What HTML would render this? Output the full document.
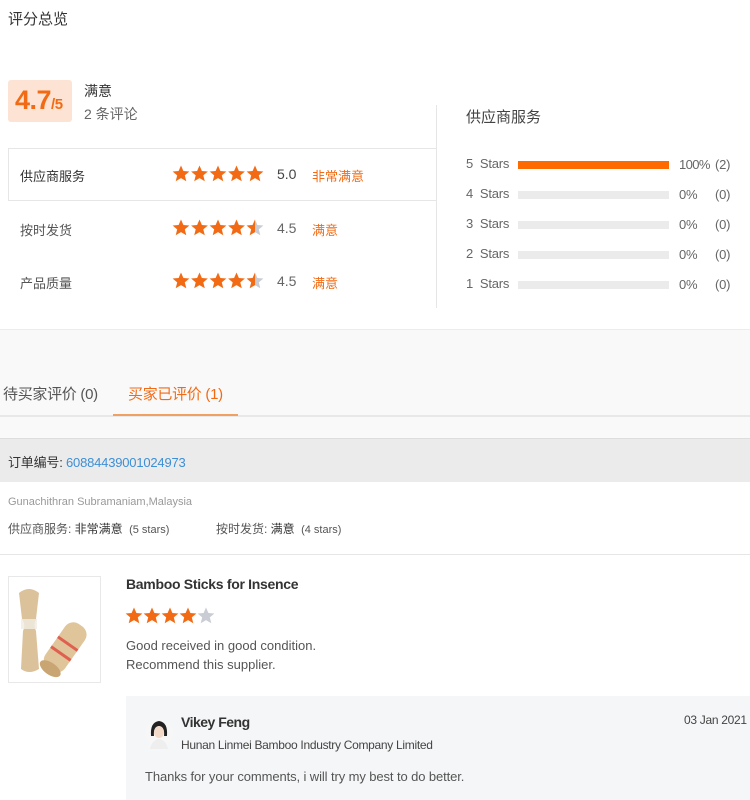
<!DOCTYPE html>
<html><head><meta charset="utf-8"><style>
*{margin:0;padding:0;box-sizing:border-box}
body{width:750px;height:800px;position:relative;background:#fff;font-family:"Liberation Sans","Noto Sans CJK SC",sans-serif;color:#333;overflow:hidden}
.a{position:absolute;white-space:nowrap}
svg.s{position:absolute}
.g{color:#666}
.o{color:#f26b14}
.bar{position:absolute;left:518px;width:151px;height:8px;background:#ebebeb}
.r{font-size:13px;letter-spacing:-0.2px}
</style></head><body>
<div class="a" style="left:8px;top:8px;font-size:15px;color:#333">评分总览</div>

<div class="a" style="left:8px;top:80px;width:64px;height:42px;background:#fde3d3;border-radius:3px"></div>
<div class="a o" style="left:15px;top:85px;font-size:27px;font-weight:bold;color:#f26b14;letter-spacing:-0.5px">4.7<span style="font-size:15px">/5</span></div>
<div class="a" style="left:84px;top:81px;font-size:14px;color:#333">满意</div>
<div class="a g" style="left:84px;top:104px;font-size:14px">2 条评论</div>

<div class="a" style="left:436px;top:105px;width:1px;height:203px;background:#e6e6e6"></div>
<div class="a" style="left:8px;top:148px;width:429px;height:53px;border:1px solid #e6e6e6;border-right:none"></div>

<div class="a" style="left:20px;top:166px;font-size:13px;color:#333">供应商服务</div>
<div class="a" style="left:20px;top:220px;font-size:13px;color:#555">按时发货</div>
<div class="a" style="left:20px;top:273px;font-size:13px;color:#555">产品质量</div>

<svg class="s" style="left:172px;top:165px" width="92" height="18" viewBox="0 0 92 18" fill="#f26b14">
<polygon points="9,0.5 11.4,6 17.4,6.5 12.8,10.4 14.3,16.3 9,13.1 3.7,16.3 5.2,10.4 0.6,6.5 6.6,6"/>
<polygon transform="translate(18.5 0)" points="9,0.5 11.4,6 17.4,6.5 12.8,10.4 14.3,16.3 9,13.1 3.7,16.3 5.2,10.4 0.6,6.5 6.6,6"/>
<polygon transform="translate(37 0)" points="9,0.5 11.4,6 17.4,6.5 12.8,10.4 14.3,16.3 9,13.1 3.7,16.3 5.2,10.4 0.6,6.5 6.6,6"/>
<polygon transform="translate(55.5 0)" points="9,0.5 11.4,6 17.4,6.5 12.8,10.4 14.3,16.3 9,13.1 3.7,16.3 5.2,10.4 0.6,6.5 6.6,6"/>
<polygon transform="translate(74 0)" points="9,0.5 11.4,6 17.4,6.5 12.8,10.4 14.3,16.3 9,13.1 3.7,16.3 5.2,10.4 0.6,6.5 6.6,6"/>
</svg>
<svg class="s" style="left:172px;top:219px" width="92" height="18" viewBox="0 0 92 18" fill="#f26b14">
<polygon points="9,0.5 11.4,6 17.4,6.5 12.8,10.4 14.3,16.3 9,13.1 3.7,16.3 5.2,10.4 0.6,6.5 6.6,6"/>
<polygon transform="translate(18.5 0)" points="9,0.5 11.4,6 17.4,6.5 12.8,10.4 14.3,16.3 9,13.1 3.7,16.3 5.2,10.4 0.6,6.5 6.6,6"/>
<polygon transform="translate(37 0)" points="9,0.5 11.4,6 17.4,6.5 12.8,10.4 14.3,16.3 9,13.1 3.7,16.3 5.2,10.4 0.6,6.5 6.6,6"/>
<polygon transform="translate(55.5 0)" points="9,0.5 11.4,6 17.4,6.5 12.8,10.4 14.3,16.3 9,13.1 3.7,16.3 5.2,10.4 0.6,6.5 6.6,6"/>
<polygon transform="translate(74 0)" fill="#c9ccd4" points="9,0.5 11.4,6 17.4,6.5 12.8,10.4 14.3,16.3 9,13.1 3.7,16.3 5.2,10.4 0.6,6.5 6.6,6"/>
<polygon transform="translate(74 0)" points="9,0.5 9,13.1 3.7,16.3 5.2,10.4 0.6,6.5 6.6,6"/>
</svg>
<svg class="s" style="left:172px;top:272px" width="92" height="18" viewBox="0 0 92 18" fill="#f26b14">
<polygon points="9,0.5 11.4,6 17.4,6.5 12.8,10.4 14.3,16.3 9,13.1 3.7,16.3 5.2,10.4 0.6,6.5 6.6,6"/>
<polygon transform="translate(18.5 0)" points="9,0.5 11.4,6 17.4,6.5 12.8,10.4 14.3,16.3 9,13.1 3.7,16.3 5.2,10.4 0.6,6.5 6.6,6"/>
<polygon transform="translate(37 0)" points="9,0.5 11.4,6 17.4,6.5 12.8,10.4 14.3,16.3 9,13.1 3.7,16.3 5.2,10.4 0.6,6.5 6.6,6"/>
<polygon transform="translate(55.5 0)" points="9,0.5 11.4,6 17.4,6.5 12.8,10.4 14.3,16.3 9,13.1 3.7,16.3 5.2,10.4 0.6,6.5 6.6,6"/>
<polygon transform="translate(74 0)" fill="#c9ccd4" points="9,0.5 11.4,6 17.4,6.5 12.8,10.4 14.3,16.3 9,13.1 3.7,16.3 5.2,10.4 0.6,6.5 6.6,6"/>
<polygon transform="translate(74 0)" points="9,0.5 9,13.1 3.7,16.3 5.2,10.4 0.6,6.5 6.6,6"/>
</svg>

<div class="a g" style="left:277px;top:166px;font-size:14px;color:#444">5.0</div>
<div class="a g" style="left:277px;top:220px;font-size:14px">4.5</div>
<div class="a g" style="left:277px;top:273px;font-size:14px">4.5</div>
<div class="a o" style="left:312px;top:166px;font-size:13px">非常满意</div>
<div class="a o" style="left:312px;top:220px;font-size:13px">满意</div>
<div class="a o" style="left:312px;top:273px;font-size:13px">满意</div>

<div class="a" style="left:466px;top:106px;font-size:15px;color:#444">供应商服务</div>
<div class="a g r" style="left:466px;top:156px">5&nbsp; Stars</div>
<div class="a g r" style="left:466px;top:186px">4&nbsp; Stars</div>
<div class="a g r" style="left:466px;top:216px">3&nbsp; Stars</div>
<div class="a g r" style="left:466px;top:246px">2&nbsp; Stars</div>
<div class="a g r" style="left:466px;top:276px">1&nbsp; Stars</div>
<div class="bar" style="top:161px;background:#ff6a00"></div>
<div class="bar" style="top:191px"></div>
<div class="bar" style="top:221px"></div>
<div class="bar" style="top:251px"></div>
<div class="bar" style="top:281px"></div>
<div class="a g r" style="left:679px;top:157px;letter-spacing:-0.6px">100%</div>
<div class="a g r" style="left:679px;top:187px">0%</div>
<div class="a g r" style="left:679px;top:217px">0%</div>
<div class="a g r" style="left:679px;top:247px">0%</div>
<div class="a g r" style="left:679px;top:277px">0%</div>
<div class="a g r" style="left:715px;top:157px">(2)</div>
<div class="a g r" style="left:715px;top:187px">(0)</div>
<div class="a g r" style="left:715px;top:217px">(0)</div>
<div class="a g r" style="left:715px;top:247px">(0)</div>
<div class="a g r" style="left:715px;top:277px">(0)</div>

<div class="a" style="left:0;top:329px;width:750px;height:109px;background:#f9f9f9;border-top:1px solid #ececec"></div>
<div class="a" style="left:0;top:415px;width:750px;height:2px;background:#e8e8e8"></div>
<div class="a" style="left:3px;top:383px;font-size:15px;color:#555;letter-spacing:-0.3px">待买家评价 (0)</div>
<div class="a o" style="left:128px;top:383px;font-size:15px;letter-spacing:-0.3px">买家已评价 (1)</div>
<div class="a" style="left:113px;top:414px;width:125px;height:2px;background:#f0a060"></div>

<div class="a" style="left:0;top:438px;width:750px;height:44px;background:#ebebeb;border-top:1px solid #ddd"></div>
<div class="a" style="left:8px;top:452px;font-size:13px;color:#333;letter-spacing:-0.2px">订单编号: <span style="color:#3d8fd6">60884439001024973</span></div>

<div class="a" style="left:8px;top:496px;font-size:11px;color:#999">Gunachithran Subramaniam,Malaysia</div>
<div class="a" style="left:8px;top:520px;font-size:12px;color:#555">供应商服务: <span style="color:#333">非常满意</span> <span style="font-size:11px">&nbsp;(5 stars)</span></div>
<div class="a" style="left:216px;top:520px;font-size:12px;color:#555">按时发货: <span style="color:#333">满意</span> <span style="font-size:11px">&nbsp;(4 stars)</span></div>
<div class="a" style="left:0;top:554px;width:750px;height:1px;background:#e6e6e6"></div>

<div class="a" style="left:8px;top:576px;width:93px;height:107px;border:1px solid #e8e8e8">
<svg width="91" height="105" viewBox="0 0 91 105">
<path d="M10 16 Q20 8 30 16 L27 42 Q24 48 27 54 L30 92 Q20 98 12 92 L14 54 Q17 48 13 42 Z" fill="#dcc29a"/>
<rect x="12" y="42" width="16" height="10" fill="#f0ece4" opacity=".8"/>
<g transform="rotate(-55 55 72)"><rect x="30" y="60" width="54" height="24" rx="10" fill="#e0c49a"/><rect x="48" y="60" width="3" height="24" fill="#e06050"/><rect x="60" y="60" width="3" height="24" fill="#e06050"/><ellipse cx="31" cy="72" rx="6" ry="12" fill="#c9a574"/></g>
</svg></div>

<div class="a" style="left:126px;top:576px;font-size:14px;font-weight:bold;color:#333;letter-spacing:-0.3px">Bamboo Sticks for Insence</div>
<svg class="s" style="left:125px;top:607px" width="92" height="18" viewBox="0 0 92 18" fill="#f26b14">
<polygon points="9,0.5 11.4,6 17.4,6.5 12.8,10.4 14.3,16.3 9,13.1 3.7,16.3 5.2,10.4 0.6,6.5 6.6,6"/>
<polygon transform="translate(18 0)" points="9,0.5 11.4,6 17.4,6.5 12.8,10.4 14.3,16.3 9,13.1 3.7,16.3 5.2,10.4 0.6,6.5 6.6,6"/>
<polygon transform="translate(36 0)" points="9,0.5 11.4,6 17.4,6.5 12.8,10.4 14.3,16.3 9,13.1 3.7,16.3 5.2,10.4 0.6,6.5 6.6,6"/>
<polygon transform="translate(54 0)" points="9,0.5 11.4,6 17.4,6.5 12.8,10.4 14.3,16.3 9,13.1 3.7,16.3 5.2,10.4 0.6,6.5 6.6,6"/>
<polygon transform="translate(72 0)" fill="#c9ccd4" points="9,0.5 11.4,6 17.4,6.5 12.8,10.4 14.3,16.3 9,13.1 3.7,16.3 5.2,10.4 0.6,6.5 6.6,6"/>
</svg>
<div class="a" style="left:126px;top:636px;font-size:13px;color:#555;line-height:19px">Good received in good condition.<br>Recommend this supplier.</div>

<div class="a" style="left:126px;top:696px;width:624px;height:104px;background:#f5f6f7"></div>
<svg class="s" style="left:144px;top:716px" width="30" height="34" viewBox="0 0 30 34">
<circle cx="15" cy="17" r="14" fill="#f7f7f7"/>
<path d="M7 20 Q6 6 15 5 Q24 6 23 20 L20 20 Q21 11 15 10 Q9 11 10 20Z" fill="#222"/>
<ellipse cx="15" cy="16" rx="5" ry="6" fill="#f3d9c8"/>
<path d="M6 33 Q8 24 15 23 Q22 24 24 33Z" fill="#eee"/>
</svg>
<div class="a" style="left:181px;top:714px;font-size:14px;font-weight:bold;color:#333;letter-spacing:-0.5px">Vikey Feng</div>
<div class="a" style="left:181px;top:738px;font-size:12px;color:#444;letter-spacing:-0.3px">Hunan Linmei Bamboo Industry Company Limited</div>
<div class="a" style="left:684px;top:713px;font-size:12px;color:#444;letter-spacing:-0.3px">03 Jan 2021</div>
<div class="a" style="left:145px;top:769px;font-size:13px;color:#555;letter-spacing:-0.1px">Thanks for your comments, i will try my best to do better.</div>
</body></html>
